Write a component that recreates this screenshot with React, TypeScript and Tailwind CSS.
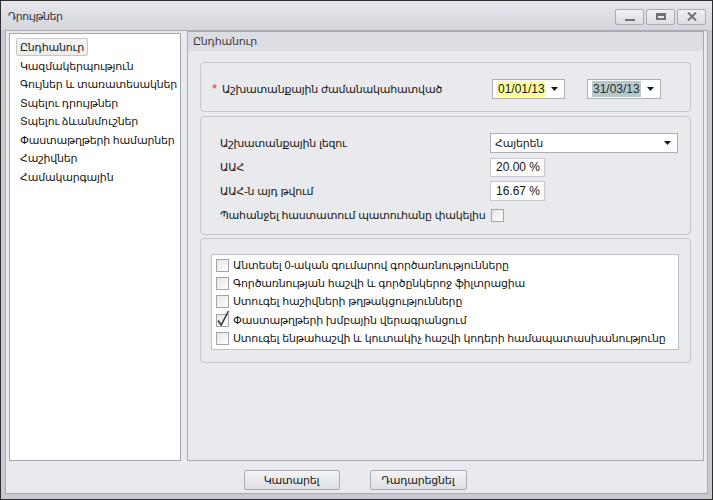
import { useState } from "react"

const navItems = [
  "Ընդհանուր",
  "Կազմակերպություն",
  "Գույներ և տառատեսակներ",
  "Տպելու դրույթներ",
  "Տպելու ձևանմուշներ",
  "Փաստաթղթերի համարներ",
  "Հաշիվներ",
  "Համակարգային",
]

const options = [
  { label: "Անտեսել 0-ական գումարով գործառնությունները", checked: false },
  { label: "Գործառնության հաշվի և գործընկերոջ ֆիլտրացիա", checked: false },
  { label: "Ստուգել հաշիվների թղթակցությունները", checked: false },
  { label: "Փաստաթղթերի խմբային վերագրանցում", checked: true },
  { label: "Ստուգել ենթահաշվի և կուտակիչ հաշվի կոդերի համապատասխանությունը", checked: false },
]

function Arrow() {
  return (
    <svg width="7" height="4" viewBox="0 0 7 4" className="shrink-0">
      <path d="M0 0 H7 L3.5 4 Z" fill="#1a1a1a" />
    </svg>
  )
}

function CheckBox({ checked }: { checked: boolean }) {
  return (
    <span className="relative w-[13px] h-[13px] shrink-0 border border-[#a3a4ad] bg-gradient-to-br from-[#e4e5e9] to-white">
      {checked && (
        <svg width="14" height="18" viewBox="0 0 14 18" className="absolute left-[-1px] top-[-6px]">
          <path d="M2 11.5 L5.2 16 L12.5 2" stroke="#3a3a3a" strokeWidth="1.6" fill="none" />
        </svg>
      )}
    </span>
  )
}

function TitleButton({ kind }: { kind: "min" | "max" | "close" }) {
  return (
    <button className="w-[29px] h-[16px] rounded-[2px] border border-[#a9aab2] bg-gradient-to-b from-[#f1f1f3] to-[#dcdde2] flex items-center justify-center">
      {kind === "min" && <span className="mt-[6px] w-[10px] h-[2px] bg-[#6f7080]" />}
      {kind === "max" && <span className="w-[10px] h-[7px] border-2 border-t-[3px] border-[#6f7080]" />}
      {kind === "close" && (
        <svg width="10" height="9" viewBox="0 0 10 9">
          <path d="M1 0.5 L9 8.5 M9 0.5 L1 8.5" stroke="#6f7080" strokeWidth="2" />
        </svg>
      )}
    </button>
  )
}

export default function App() {
  const [selected] = useState(0)

  return (
    <div className="w-[713px] h-[500px] flex flex-col bg-[#c9cad1] border border-[#2e2e30] font-['Liberation_Sans','DejaVu_Sans',sans-serif] text-[11px] tracking-[-0.2px] text-[#161616] overflow-hidden">
      {/* Title bar */}
      <div className="h-[29px] shrink-0 flex items-center pl-[7px] pr-[6px] bg-gradient-to-b from-[#e6e7eb] to-[#d5d6dc]">
        <span className="text-[11px] tracking-[-0.5px] text-[#333] mt-[2px]">Դրույթներ</span>
        <div className="ml-auto flex gap-[2px] mt-[2px]">
          <TitleButton kind="min" />
          <TitleButton kind="max" />
          <TitleButton kind="close" />
        </div>
      </div>

      {/* Body frame */}
      <div className="mx-[4px] h-[464px] border border-[#a9aab3] bg-[#e9eaee] flex flex-col">
        <div className="h-[430px] flex pr-[2px]">
          {/* Nav list */}
          <div className="ml-[3px] mt-[2px] w-[172px] h-[428px] border border-[#a3a4ae] bg-white pt-[4px] pl-[7px]">
            {navItems.map((item, i) => (
              <div key={item} className="h-[18.5px] flex items-center whitespace-nowrap">
                <span
                  className={
                    i === selected
                      ? "h-[18px] px-[3px] -ml-[1px] flex items-center border border-[#c6c7cd] rounded-[2px] bg-gradient-to-b from-[#f7f7f8] to-[#ebebee]"
                      : "pl-[3px]"
                  }
                >
                  {item}
                </span>
              </div>
            ))}
          </div>

          {/* Settings group */}
          <div className="ml-[6px] w-[517px] h-[430px] border border-[#a9aab3] flex flex-col">
            <div className="h-[19px] shrink-0 bg-[#dcdde2] flex items-center pl-[5px] text-[#3c3c3c]">Ընդհանուր</div>

            <div className="px-[12px] pt-[11px] flex flex-col">
              {/* Work period */}
              <div className="h-[50px] rounded-[4px] border border-[#c5c6cd] pl-[11px] pt-[16px]">
                <div className="h-[20px] flex items-center">
                  <div className="w-[280px] flex items-center">
                    <span className="text-[#f03030] w-[10px] text-[13px]">*</span>
                    <span>Աշխատանքային ժամանակահատված</span>
                  </div>
                  <div className="w-[73px] h-[20px] border border-[#adaeb6] bg-white flex items-center pl-[4px] pr-[6px]">
                    <span className="bg-[#ffff99] px-[1px] text-[12px] tracking-normal leading-[16px]">01/01/13</span>
                    <span className="ml-auto">
                      <Arrow />
                    </span>
                  </div>
                  <div className="ml-[22px] w-[74px] h-[20px] border border-[#adaeb6] bg-white flex items-center pl-[4px] pr-[6px]">
                    <span className="bg-[#b6caca] px-[1px] text-[12px] tracking-normal leading-[16px] text-[#2a2a40]">31/03/13</span>
                    <span className="ml-auto">
                      <Arrow />
                    </span>
                  </div>
                </div>
              </div>

              {/* Language / VAT */}
              <div className="mt-[4px] h-[119px] rounded-[4px] border border-[#c5c6cd] pl-[19px] pt-[16px] flex flex-col gap-[4px]">
                <div className="h-[20px] flex items-center">
                  <span className="w-[270px]">Աշխատանքային լեզու</span>
                  <div className="w-[188px] h-[20px] border border-[#adaeb6] bg-white flex items-center pl-[4px] pr-[6px]">
                    <span>Հայերեն</span>
                    <span className="ml-auto">
                      <Arrow />
                    </span>
                  </div>
                </div>
                <div className="h-[20px] flex items-center">
                  <span className="w-[270px]">ԱԱՀ</span>
                  <div className="w-[55px] h-[19px] border border-[#c8c9cf] bg-white flex items-center pl-[5px] text-[12px] tracking-normal">20.00 %</div>
                </div>
                <div className="h-[20px] flex items-center">
                  <span className="w-[270px]">ԱԱՀ-ն այդ թվում</span>
                  <div className="w-[55px] h-[20px] border border-[#c8c9cf] bg-white flex items-center pl-[5px] text-[12px] tracking-normal">16.67 %</div>
                </div>
                <div className="h-[20px] flex items-center">
                  <span className="w-[271px] whitespace-nowrap">Պահանջել հաստատում պատուհանը փակելիս</span>
                  <CheckBox checked={false} />
                </div>
              </div>

              {/* Options */}
              <div className="mt-[3px] h-[125px] rounded-[4px] border border-[#c5c6cd] pl-[10px] pt-[15px]">
                <div className="w-[468px] h-[96px] border border-[#c1c2c9] bg-white pt-[1px] pl-[4px]">
                  {options.map((o) => (
                    <div key={o.label} className="h-[18.3px] flex items-center gap-[4px] whitespace-nowrap">
                      <CheckBox checked={o.checked} />
                      <span>{o.label}</span>
                    </div>
                  ))}
                </div>
              </div>
            </div>
          </div>
        </div>

        {/* Buttons */}
        <div className="mt-[9px] flex justify-center gap-[30px] pr-[3px]">
          <button className="w-[96px] h-[20px] border border-[#a9aab3] rounded-[2px] bg-gradient-to-b from-[#f3f3f5] to-[#dfe0e4]">Կատարել</button>
          <button className="w-[97px] h-[20px] border border-[#a9aab3] rounded-[2px] bg-gradient-to-b from-[#f3f3f5] to-[#dfe0e4]">Դադարեցնել</button>
        </div>
      </div>
    </div>
  )
}
